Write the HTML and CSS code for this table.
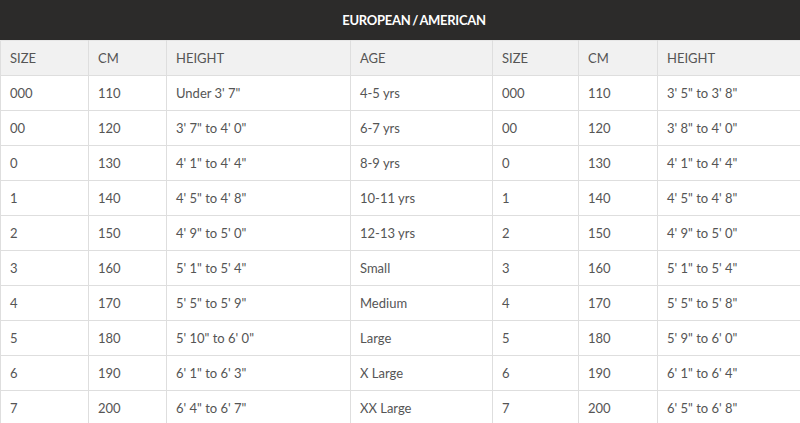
FILE: index.html
```html
<!DOCTYPE html>
<html>
<head>
<meta charset="utf-8">
<link rel="stylesheet" href="styles.css">
</head>
<body>
<div class="chart">
  <div class="title">EUROPEAN / AMERICAN</div>
  <table class="sizes">
    <colgroup>
      <col class="c1"><col class="c2"><col class="c3"><col class="c4"><col class="c5"><col class="c6"><col class="c7">
    </colgroup>
    <thead>
      <tr><th>SIZE</th><th>CM</th><th>HEIGHT</th><th>AGE</th><th>SIZE</th><th>CM</th><th>HEIGHT</th></tr>
    </thead>
    <tbody>
      <tr><td>000</td><td>110</td><td>Under 3' 7"</td><td>4-5 yrs</td><td>000</td><td>110</td><td>3' 5" to 3' 8"</td></tr>
      <tr><td>00</td><td>120</td><td>3' 7" to 4' 0"</td><td>6-7 yrs</td><td>00</td><td>120</td><td>3' 8" to 4' 0"</td></tr>
      <tr><td>0</td><td>130</td><td>4' 1" to 4' 4"</td><td>8-9 yrs</td><td>0</td><td>130</td><td>4' 1" to 4' 4"</td></tr>
      <tr><td>1</td><td>140</td><td>4' 5" to 4' 8"</td><td>10-11 yrs</td><td>1</td><td>140</td><td>4' 5" to 4' 8"</td></tr>
      <tr><td>2</td><td>150</td><td>4' 9" to 5' 0"</td><td>12-13 yrs</td><td>2</td><td>150</td><td>4' 9" to 5' 0"</td></tr>
      <tr><td>3</td><td>160</td><td>5' 1" to 5' 4"</td><td>Small</td><td>3</td><td>160</td><td>5' 1" to 5' 4"</td></tr>
      <tr><td>4</td><td>170</td><td>5' 5" to 5' 9"</td><td>Medium</td><td>4</td><td>170</td><td>5' 5" to 5' 8"</td></tr>
      <tr><td>5</td><td>180</td><td>5' 10" to 6' 0"</td><td>Large</td><td>5</td><td>180</td><td>5' 9" to 6' 0"</td></tr>
      <tr><td>6</td><td>190</td><td>6' 1" to 6' 3"</td><td>X Large</td><td>6</td><td>190</td><td>6' 1" to 6' 4"</td></tr>
      <tr><td>7</td><td>200</td><td>6' 4" to 6' 7"</td><td>XX Large</td><td>7</td><td>200</td><td>6' 5" to 6' 8"</td></tr>
    </tbody>
  </table>
</div>
</body>
</html>
```
FILE: styles.css
```css
html, body {
  margin: 0;
  padding: 0;
  background: #ffffff;
  overflow: hidden;
}
body {
  font-family: Lato, "Open Sans", "Liberation Sans", sans-serif;
  color: #555555;
}
.chart {
  width: 828px;
}
.title {
  height: 40px;
  background: #2c2b2a;
  color: #ffffff;
  font-weight: 700;
  font-size: 13px;
  letter-spacing: -0.3px;
  word-spacing: -1px;
  display: flex;
  align-items: center;
  justify-content: center;
  box-sizing: border-box;
  padding-bottom: 1px;
}
.sizes {
  width: 828px;
  border-collapse: collapse;
  table-layout: fixed;
  font-size: 13px;
}
.c1 { width: 88px; }
.c2 { width: 78px; }
.c3 { width: 184px; }
.c4 { width: 142px; }
.c5 { width: 86px; }
.c6 { width: 79px; }
.c7 { width: 171px; }
.sizes th,
.sizes td {
  border: 1px solid #dedede;
  height: 35px;
  padding: 0 0 0 9px;
  box-sizing: border-box;
  text-align: left;
  font-weight: 400;
  white-space: nowrap;
  vertical-align: middle;
}
.sizes thead th {
  background: #f1f1f1;
  border-top-color: #e6e6e6;
}
```
